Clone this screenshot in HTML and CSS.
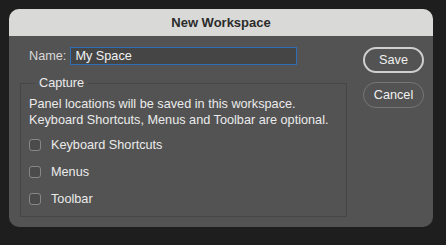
FILE: index.html
```html
<!DOCTYPE html>
<html lang="en">
<head>
    <title>New Workspace</title>
    <link rel="stylesheet" href="styles.css">
</head>
<body>
    <div class="dialog">
        <div class="titleBar">New Workspace</div>
        <div class="dialogBody">
            <div class="mainCol">
                <div class="nameRow">
                    <label for="wsName">Name:</label>
                    <input id="wsName" class="nameInput" type="text" value="My Space">
                </div>
                <fieldset class="capture">
                    <legend>Capture</legend>
                    <p class="note">
                        Panel locations will be saved in this workspace.<br>
                        Keyboard Shortcuts, Menus and Toolbar are optional.
                    </p>
                    <label class="option"><span class="box"></span>Keyboard Shortcuts</label>
                    <label class="option"><span class="box"></span>Menus</label>
                    <label class="option"><span class="box"></span>Toolbar</label>
                </fieldset>
            </div>
            <div class="buttons">
                <button class="btn primary">Save</button>
                <button class="btn">Cancel</button>
            </div>
        </div>
    </div>
</body>
</html>
```
FILE: styles.css
```css
* {
    margin: 0;
    padding: 0;
    box-sizing: border-box;
    font-family: 'Liberation Sans', Arial, sans-serif;
}

body {
    background: #1e1e1e;
    padding: 9px 13px 0 9px;
}

.dialog {
    width: 424px;
    height: 218px;
    background: #535353;
    border-radius: 10px;
    overflow: hidden;
    color: #ebebeb;
    font-size: 12.7px;
}

.titleBar {
    height: 27px;
    line-height: 27px;
    background: #d9dad7;
    color: #2b2b2b;
    text-align: center;
    font-weight: bold;
    font-size: 13px;
}

.dialogBody {
    display: grid;
    grid-template-columns: 327px 61px;
    column-gap: 16px;
    padding: 11px 9px 0 11px;
}

.nameRow {
    display: flex;
    align-items: center;
    gap: 4px;
    padding-left: 9px;
    color: #d8d8d8;
}

.nameInput {
    width: 227px;
    height: 18px;
    background: #454545;
    border: 1.5px solid #2f6fb8;
    color: #f2f2f2;
    font-size: 12.7px;
    padding: 0 4px;
    outline: none;
}

.capture {
    margin-top: 11px;
    height: 141px;
    border: 1px solid #464646;
    padding: 0 8px 0 8px;
}

.capture legend {
    margin-left: 6px;
    padding: 0 4px;
    line-height: 14px;
    font-size: 12.7px;
}

.note {
    margin-top: 6px;
    line-height: 16px;
}

.option {
    display: flex;
    align-items: center;
    gap: 10px;
    height: 27px;
}

.note + .option {
    margin-top: 3px;
}

.box {
    width: 12px;
    height: 12px;
    border: 1px solid #878787;
    border-radius: 3px;
    background: #4b4b4b;
}

.buttons {
    display: flex;
    flex-direction: column;
    gap: 9px;
}

.btn {
    height: 26px;
    border-radius: 13px;
    background: transparent;
    border: 1px solid #767676;
    color: #f0f0f0;
    font-size: 12.7px;
}

.btn.primary {
    border: 2px solid #cfcfcf;
}
```
